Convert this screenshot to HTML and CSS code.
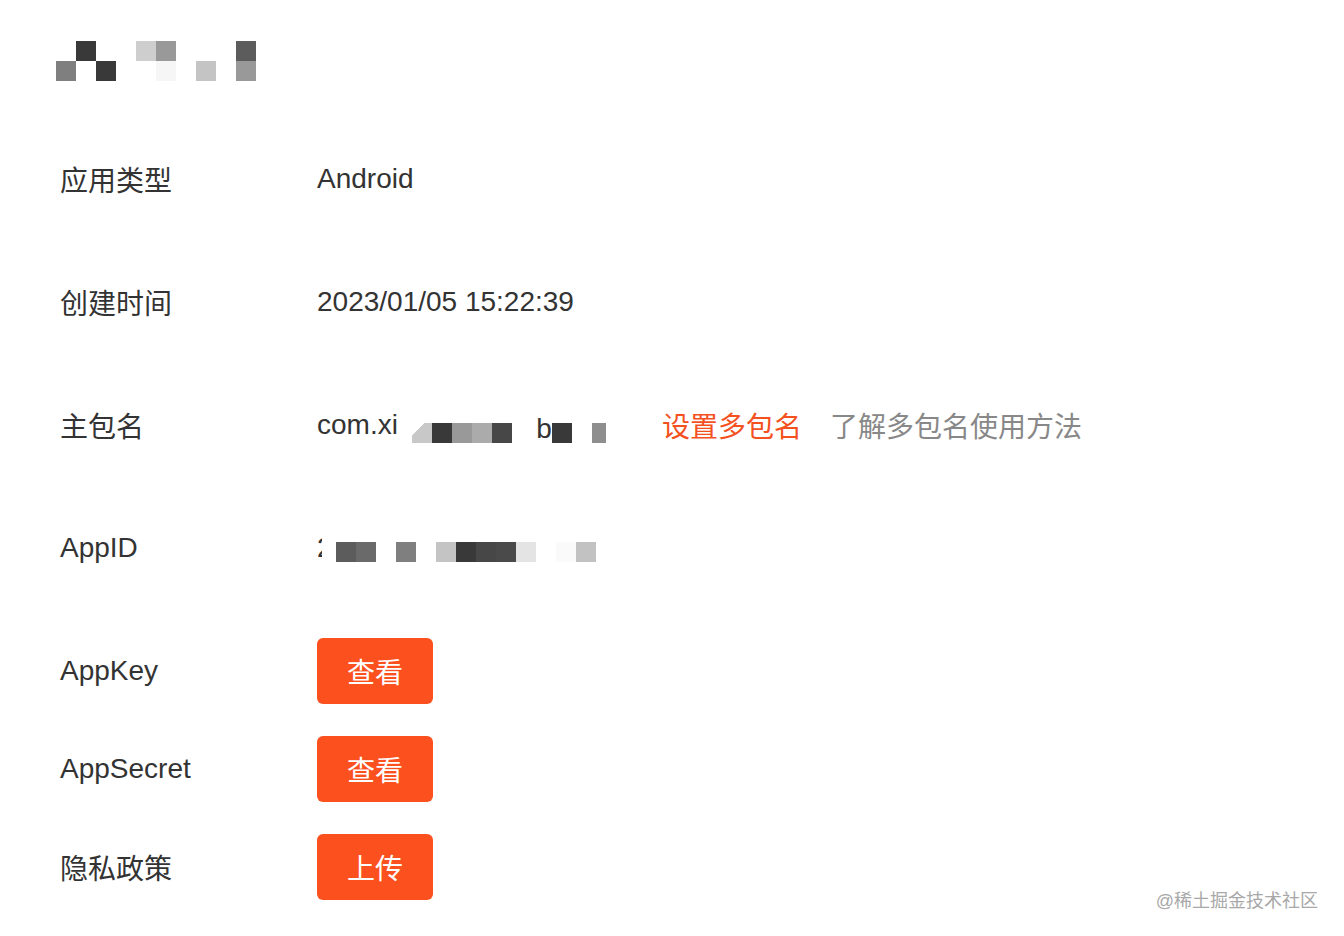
FILE: index.html
```html
<!DOCTYPE html>
<html lang="zh-CN">
<head>
    <meta charset="UTF-8">
    <meta name="viewport" content="width=device-width, initial-scale=1.0">
    <title>应用详情</title>
    <link rel="stylesheet" href="styles.css">
</head>
<body>
    <!-- 应用名称（已打码） -->
    <div class="app-title mosaic-grid">
        <span></span><span class="m-dark"></span><span></span><span></span><span class="m-light"></span><span class="m-mid"></span><span></span><span></span><span></span><span class="m-dim"></span>
        <span class="m-gray"></span><span></span><span class="m-dark"></span><span></span><span></span><span class="m-faint"></span><span></span><span class="m-pale"></span><span></span><span class="m-mid"></span>
    </div>

    <!-- 应用信息 -->
    <div class="info-list">
        <div class="info-row info-row-text">
            <div class="info-label">应用类型</div>
            <div class="info-value">Android</div>
        </div>

        <div class="info-row info-row-text">
            <div class="info-label">创建时间</div>
            <div class="info-value">2023/01/05 15:22:39</div>
        </div>

        <div class="info-row info-row-text">
            <div class="info-label">主包名</div>
            <div class="info-value">
                <span class="pkg-name">com.xi</span>
                <span class="mosaic-line mosaic-pkg">
                    <span class="m-wedge"></span><span class="m-dark"></span><span class="m-mid"></span><span class="m-soft"></span><span class="m-dark2"></span><span></span><span class="m-letter">b</span><span class="m-dark"></span><span></span><span class="m-half"></span>
                </span>
                <a class="link-action" href="#">设置多包名</a>
                <a class="link-help" href="#">了解多包名使用方法</a>
            </div>
        </div>

        <div class="info-row info-row-text">
            <div class="info-label">AppID</div>
            <div class="info-value">
                <span class="id-head">2</span>
                <span class="mosaic-line mosaic-id">
                    <span class="m-dim"></span><span class="m-dim2"></span><span></span><span class="m-gray"></span><span></span><span class="m-pale"></span><span class="m-dark"></span><span class="m-dark2"></span><span class="m-dark3"></span><span class="m-faint2"></span><span></span><span class="m-ghost"></span><span class="m-pale2"></span>
                </span>
            </div>
        </div>

        <div class="info-row">
            <div class="info-label">AppKey</div>
            <div class="info-value"><button class="action-btn">查看</button></div>
        </div>

        <div class="info-row">
            <div class="info-label">AppSecret</div>
            <div class="info-value"><button class="action-btn">查看</button></div>
        </div>

        <div class="info-row">
            <div class="info-label">隐私政策</div>
            <div class="info-value"><button class="action-btn">上传</button></div>
        </div>
    </div>

    <div class="watermark">@稀土掘金技术社区</div>
</body>
</html>
```

FILE: styles.css
```css
* {
    font-family: "Liberation Sans", "Noto Sans CJK SC", Arial, sans-serif;
    box-sizing: border-box;
}

body {
    margin: 0;
    padding: 41px 0 0 60px;
    background: #fff;
    color: #333;
    height: 100vh;
    overflow: hidden;
    position: relative;
}

/* 打码块 */
.mosaic-grid {
    display: grid;
    grid-template-columns: repeat(10, 20px);
    grid-template-rows: repeat(2, 20px);
    margin-left: -4px;
}

.mosaic-line {
    display: inline-flex;
    height: 20px;
}

.mosaic-pkg {
    margin-top: 16px;
}

.mosaic-id {
    margin-top: 8px;
}

.mosaic-line span {
    width: 20px;
    height: 20px;
    flex-shrink: 0;
}

.m-dark { background: #393939; }
.m-dark2 { background: #474747; }
.m-dark3 { background: #4a4a4a; }
.m-dim { background: #5c5c5c; }
.m-dim2 { background: #6a6a6a; }
.m-gray { background: #7f7f7f; }
.m-mid { background: #999; }
.m-soft { background: #ababab; }
.m-light { background: #cecece; }
.m-pale { background: #c4c4c4; }
.m-pale2 { background: #c2c2c2; }
.m-faint { background: #f6f6f6; }
.m-faint2 { background: #e4e4e4; }
.m-ghost { background: #fafafa; }
.m-wedge { background: linear-gradient(135deg, #fff 0 30%, #c8c8c8 30%); }
.m-half { background: linear-gradient(90deg, #8e8e8e 0 70%, #fff 70%); }

.mosaic-line .m-letter {
    font-size: 28px;
    line-height: 12px;
    color: #333;
    text-align: right;
}

/* 信息列表 */
.info-list {
    display: flex;
    flex-direction: column;
    margin-top: 65px;
}

.info-row {
    display: flex;
    align-items: center;
    height: 66px;
    margin-bottom: 32px;
}

.info-row-text {
    margin-bottom: 57px;
}

.info-label {
    width: 257px;
    flex-shrink: 0;
    font-size: 28px;
    color: #333;
}

.info-value {
    display: flex;
    align-items: center;
    font-size: 28px;
    color: #333;
}

.pkg-name {
    margin-right: 14px;
}

.id-head {
    width: 5px;
    overflow: hidden;
    margin-right: 14px;
}

.link-action {
    margin-left: 50px;
    color: #f4511e;
    text-decoration: none;
}

.link-help {
    margin-left: 28px;
    color: #888;
    text-decoration: none;
}

.action-btn {
    width: 116px;
    height: 66px;
    border: none;
    border-radius: 6px;
    background: #fd501f;
    color: #fff;
    font-size: 28px;
    padding: 0;
    cursor: pointer;
}

.watermark {
    position: absolute;
    right: 26px;
    bottom: 24px;
    font-size: 18px;
    color: #a8a8a8;
}
```
